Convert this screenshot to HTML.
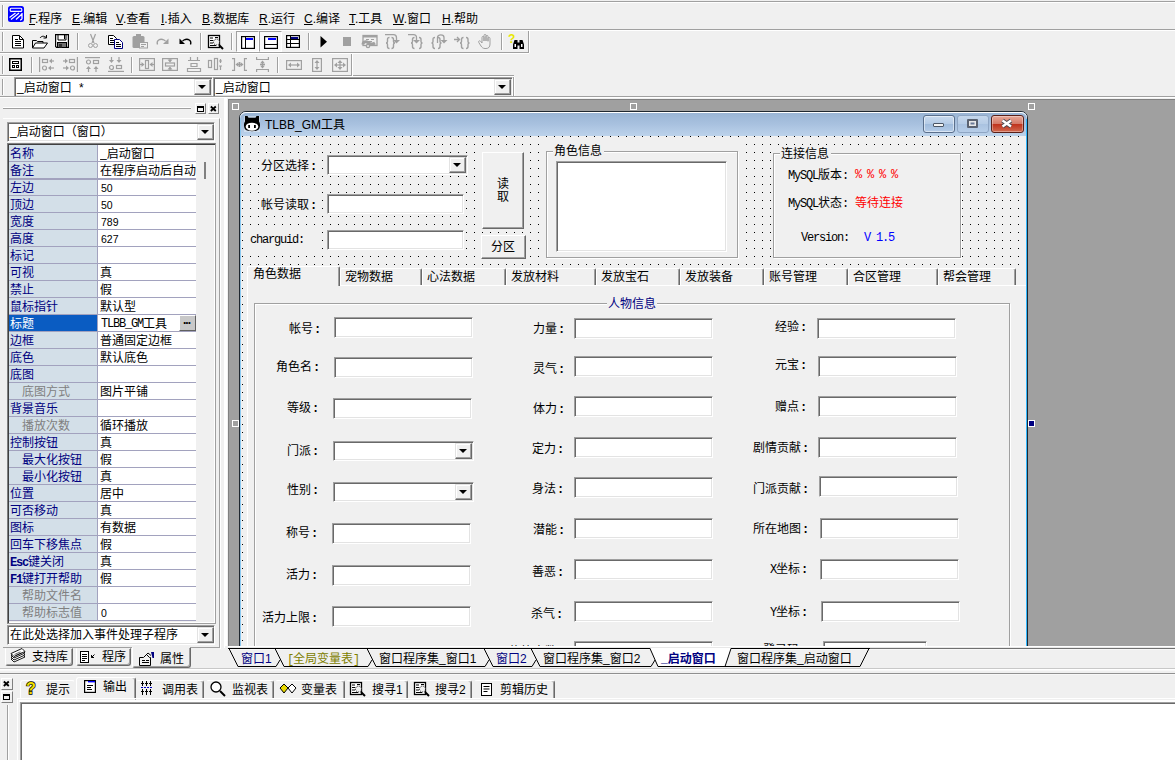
<!DOCTYPE html><html><head><meta charset="utf-8"><title>TLBB_GM</title><style>
*{box-sizing:border-box}
html,body{margin:0;padding:0}
body{width:1175px;height:760px;position:relative;overflow:hidden;background:#f0f0f0;
 font:12px "Liberation Sans","Noto Sans CJK SC",sans-serif;color:#000}
.a{position:absolute}
.t{position:absolute;white-space:nowrap;line-height:14px;height:14px}
.m{font-family:"Liberation Mono","Noto Sans CJK SC",monospace;font-size:12px;letter-spacing:-1.2px}
.m b{font-weight:normal;font-size:12px;letter-spacing:0;font-family:"Liberation Sans","Noto Sans CJK SC",sans-serif}
.hl{position:absolute;height:2px;border-top:1px solid #a0a0a0;border-bottom:1px solid #fff}
.vl{position:absolute;width:2px;border-left:1px solid #a0a0a0;border-right:1px solid #fff}
.sk{position:absolute;background:#fff;border:1px solid;border-color:#a0a0a0 #fff #fff #a0a0a0;
 box-shadow:inset 1px 1px 0 #696969, inset -1px -1px 0 #e3e3e3}
.rb{position:absolute;background:#f0f0f0;border:1px solid;border-color:#fff #696969 #696969 #fff;
 box-shadow:inset -1px -1px 0 #a0a0a0, inset 1px 1px 0 #f0f0f0}
.cb{position:absolute;background:#f0f0f0;border:1px solid;border-color:#e3e3e3 #696969 #696969 #e3e3e3;
 box-shadow:inset -1px -1px 0 #a0a0a0, inset 1px 1px 0 #fff}
.cb:after{content:"";position:absolute;left:50%;top:50%;margin:-2px 0 0 -5px;border:4px solid transparent;border-top:4px solid #000;border-bottom:none;width:0;height:0}
.gb{position:absolute;border:1px solid #a0a0a0;box-shadow:1px 1px 0 #fff, inset 1px 1px 0 #fff}
u{text-decoration:underline}
svg{position:absolute;overflow:visible}
</style></head><body>
<div class="hl" style="left:0px;top:1px;width:1175px"></div>
<div class="vl" style="left:2px;top:5px;height:22px"></div>
<div class="vl" style="left:2px;top:32px;height:19px"></div>
<div class="vl" style="left:2px;top:56px;height:18px"></div>
<div class="vl" style="left:2px;top:79px;height:16px"></div>
<svg style="left:8px;top:6px" width="16" height="16" viewBox="0 0 16 16"><rect x="0" y="0" width="16" height="16" rx="2.500" fill="#0000ff"/><rect x="2.200" y="2.200" width="11.600" height="3.200" rx="1" fill="none" stroke="#fff" stroke-width="1.100"/><path d="M7.500 7L1.500 11.500M11 7L3 13.500M14 8L8 13.500M14 7v5.500c0 1-1 1.500-2 1.500" fill="none" stroke="#fff" stroke-width="1.300"/></svg>
<div class="t " style="left:29px;top:12px;"><u>F</u>.程序</div>
<div class="t " style="left:72px;top:12px;"><u>E</u>.编辑</div>
<div class="t " style="left:116px;top:12px;"><u>V</u>.查看</div>
<div class="t " style="left:161px;top:12px;"><u>I</u>.插入</div>
<div class="t " style="left:202px;top:12px;"><u>B</u>.数据库</div>
<div class="t " style="left:259px;top:12px;"><u>R</u>.运行</div>
<div class="t " style="left:304px;top:12px;"><u>C</u>.编译</div>
<div class="t " style="left:349px;top:12px;"><u>T</u>.工具</div>
<div class="t " style="left:393px;top:12px;"><u>W</u>.窗口</div>
<div class="t " style="left:442px;top:12px;"><u>H</u>.帮助</div>
<div class="hl" style="left:0px;top:29px;width:1175px"></div>
<div class="hl" style="left:0px;top:52px;width:529px"></div>
<div class="vl" style="left:528px;top:31px;height:22px"></div>
<div class="hl" style="left:0px;top:75px;width:514px"></div>
<div class="vl" style="left:351px;top:54px;height:22px"></div>
<div class="vl" style="left:513px;top:77px;height:20px"></div>
<svg style="left:12px;top:35px" width="12" height="14" viewBox="0 0 12 14"><path d="M0.5 0.5h7l4 4v8.5h-11z" fill="#fff" stroke="#000"/><path d="M7.5 0.5v4h4" fill="none" stroke="#000"/><path d="M3 4.5h3M3 6.5h6M3 8.5h6M3 10.5h6" stroke="#000"/></svg>
<svg style="left:32px;top:35px" width="16" height="14" viewBox="0 0 16 14"><path d="M0.5 13V5.5h4l1 1h5.5V8" fill="none" stroke="#000"/><path d="M0.5 13l3-5h12l-3.5 5z" fill="#fff" stroke="#000"/><path d="M8 3c1.5-2 4-2.5 6-.5M14.5 0v3h-3" fill="none" stroke="#000"/></svg>
<svg style="left:55px;top:34px" width="14" height="14" viewBox="0 0 14 14"><path d="M0.600 0.600h12.800v12.800h-11.800l-1-1z" fill="#fff" stroke="#000" stroke-width="1.200"/><path d="M3 .5v5.500h8v-5.500" fill="none" stroke="#000"/><path d="M9.500 1v4" stroke="#000"/><rect x="2.500" y="8.500" width="9" height="5" fill="#707070" stroke="#000"/><rect x="4" y="10" width="3" height="3.500" fill="#303030"/></svg>
<div class="vl" style="left:77px;top:33px;height:17px"></div>
<svg style="left:88px;top:34px" width="10" height="15" viewBox="0 0 10 15"><path d="M2.5 0l3.5 9M7.5 0L4 9" stroke="#a0a0a0" fill="none" stroke-width="1.2"/><circle cx="2.5" cy="11.5" r="2" fill="none" stroke="#a0a0a0"/><circle cx="7.5" cy="11.5" r="2" fill="none" stroke="#a0a0a0"/></svg>
<svg style="left:108px;top:35px" width="16" height="14" viewBox="0 0 16 14"><path d="M0.5 0.5h5l3 3v6h-8z" fill="#fff" stroke="#000"/><path d="M2 3.5h3M2 5.5h5M2 7.5h5" stroke="#000"/><path d="M6.5 4.5h5l3 3v6h-8z" fill="#fff" stroke="#000080"/><path d="M8 7.5h3M8 9.5h5M8 11.5h5" stroke="#000"/></svg>
<svg style="left:132px;top:34px" width="16" height="15" viewBox="0 0 16 15"><rect x="0.5" y="2" width="12" height="12" rx="1.5" fill="#a0a0a0"/><rect x="4" y="0" width="5" height="3" fill="#a0a0a0"/><rect x="7.5" y="8.500" width="8" height="5.500" fill="#f0f0f0" stroke="#a0a0a0"/><path d="M9 10.5h5M9 12.500h3" stroke="#a0a0a0"/></svg>
<svg style="left:156px;top:37px" width="13" height="9" viewBox="0 0 13 9"><path d="M1.500 7.500C0 3.500 4 1 8 3l1.500 1" fill="none" stroke="#a0a0a0" stroke-width="1.300"/><path d="M12.500 1.500v5.500h-5.500z" fill="#a0a0a0"/></svg>
<svg style="left:179px;top:37px" width="13" height="9" viewBox="0 0 13 9"><path d="M11.500 7.500C13 3.500 9 1 5 3l-1.500 1" fill="none" stroke="#000" stroke-width="1.300"/><path d="M0.500 1.500v5.500h5.500z" fill="#000"/></svg>
<div class="vl" style="left:200px;top:33px;height:17px"></div>
<svg style="left:208px;top:35px" width="16" height="15" viewBox="0 0 16 15"><rect x="0.5" y="0.5" width="11" height="12" fill="#fff" stroke="#000" stroke-width="1.300"/><path d="M2 3h3M2 5.500h3M2 8h3M2 10.500h6M7 2.500h3" stroke="#000"/><circle cx="8.500" cy="7" r="3" fill="#f0f0f0" stroke="#000" stroke-dasharray="1 1"/><path d="M11 10l4 4" stroke="#000" stroke-width="2"/></svg>
<div class="vl" style="left:231px;top:33px;height:17px"></div>
<div class="a" style="left:236px;top:31px;width:23px;height:21px;background:#f8f8f8;border:1px solid;border-color:#a0a0a0 #fff #fff #a0a0a0"></div>
<div class="a" style="left:259px;top:31px;width:23px;height:21px;background:#f8f8f8;border:1px solid;border-color:#a0a0a0 #fff #fff #a0a0a0"></div>
<svg style="left:241px;top:36px" width="14" height="13" viewBox="0 0 14 13"><g shape-rendering="crispEdges"><rect x="0.600" y="0.600" width="12.800" height="11.800" fill="#fff" stroke="#000" stroke-width="1.200" shape-rendering="auto"/><rect x="5" y="2" width="7" height="2" fill="#0000ff"/><rect x="4" y="1" width="1" height="11" fill="#000"/></g></svg>
<svg style="left:264px;top:36px" width="14" height="13" viewBox="0 0 14 13"><g shape-rendering="crispEdges"><rect x="0.600" y="0.600" width="12.800" height="11.800" fill="#fff" stroke="#000" stroke-width="1.200" shape-rendering="auto"/><rect x="4" y="2" width="8" height="2" fill="#0000ff"/><rect x="1" y="8" width="12" height="1" fill="#000"/></g></svg>
<svg style="left:286px;top:35px" width="14" height="13" viewBox="0 0 14 13"><g shape-rendering="crispEdges"><rect x="0.600" y="0.600" width="12.800" height="11.800" fill="#fff" stroke="#000" stroke-width="1.200" shape-rendering="auto"/><rect x="5" y="2" width="7" height="2" fill="#000080"/><rect x="4" y="1" width="1" height="11" fill="#000"/><rect x="1" y="4" width="12" height="1" fill="#000"/><rect x="1" y="8" width="12" height="1" fill="#000"/></g></svg>
<div class="vl" style="left:308px;top:33px;height:17px"></div>
<svg style="left:320px;top:36px" width="8" height="12" viewBox="0 0 8 12"><path d="M0.500 0L7 5.750L0.500 11.500z" fill="#000"/></svg>
<svg style="left:343px;top:37px" width="8" height="9" viewBox="0 0 8 9"><rect width="8" height="9" fill="#a0a0a0"/></svg>
<svg style="left:362px;top:35px" width="16" height="14" viewBox="0 0 16 14"><rect x="1" y="0.500" width="14" height="10" fill="none" stroke="#a0a0a0" stroke-width="1.300"/><path d="M1 1.500h14" stroke="#a0a0a0" stroke-width="2"/><path d="M4 4.500h3M9 4.500h3M4 6.500h6" stroke="#a0a0a0"/><path d="M1 9.500c0-3 3-3.500 5-2s4 2.500 7 .5" fill="none" stroke="#a0a0a0" stroke-width="3"/><circle cx="6" cy="11" r="2.300" fill="#a0a0a0"/><circle cx="6" cy="11" r="0.900" fill="#f0f0f0"/></svg>
<svg style="left:385px;top:34px" width="16" height="15" viewBox="0 0 16 15"><path d="M4.5 3.5c-2 0-2 1-2 2v2c0 1-.5 1.500-1.500 1.500c1 0 1.500 .5 1.500 1.500v2c0 1 0 2 2 2" fill="none" stroke="#a0a0a0" stroke-width="1.400"/><path d="M6.5 3.5c2 0 2 1 2 2v2c0 1 .5 1.500 1.500 1.500c-1 0-1.500 .5-1.500 1.500v2c0 1 0 2-2 2" fill="none" stroke="#a0a0a0" stroke-width="1.400"/><path d="M0 0.700h8.500c2.500 0 3 1.500 3 3v3" fill="none" stroke="#a0a0a0" stroke-width="1.300"/><path d="M8 6h7l-3.500 3.500z" fill="#a0a0a0"/></svg>
<svg style="left:408px;top:34px" width="16" height="15" viewBox="0 0 16 15"><path d="M6.5 3.5c-2 0-2 1-2 2v2c0 1-.5 1.500-1.500 1.500c1 0 1.500 .5 1.500 1.500v2c0 1 0 2 2 2" fill="none" stroke="#a0a0a0" stroke-width="1.400"/><path d="M11 3.5c2 0 2 1 2 2v2c0 1 .5 1.500 1.500 1.500c-1 0-1.500 .5-1.500 1.500v2c0 1 0 2-2 2" fill="none" stroke="#a0a0a0" stroke-width="1.400"/><path d="M0 0.700h5.500c2.500 0 3 1.500 3 3v3" fill="none" stroke="#a0a0a0" stroke-width="1.300"/><path d="M5 6h7l-3.500 3.500z" fill="#a0a0a0"/></svg>
<svg style="left:431px;top:34px" width="17" height="15" viewBox="0 0 17 15"><path d="M4 3.5c-2 0-2 1-2 2v2c0 1-.5 1.500-1.500 1.500c1 0 1.500 .5 1.500 1.500v2c0 1 0 2 2 2" fill="none" stroke="#a0a0a0" stroke-width="1.400"/><path d="M7 3.5c2 0 2 1 2 2v2c0 1 .5 1.500 1.500 1.500c-1 0-1.500 .5-1.500 1.500v2c0 1 0 2-2 2" fill="none" stroke="#a0a0a0" stroke-width="1.400"/><path d="M6.500 9V3.500c0-3.500 6.500-3.500 6.500 0v3" fill="none" stroke="#a0a0a0" stroke-width="1.300"/><path d="M9.5 6h7l-3.500 3.500z" fill="#a0a0a0"/></svg>
<svg style="left:454px;top:34px" width="17" height="15" viewBox="0 0 17 15"><path d="M9.5 3.5c-2 0-2 1-2 2v2c0 1-.5 1.500-1.500 1.500c1 0 1.500 .5 1.500 1.500v2c0 1 0 2 2 2" fill="none" stroke="#a0a0a0" stroke-width="1.400"/><path d="M12 3.5c2 0 2 1 2 2v2c0 1 .5 1.500 1.500 1.500c-1 0-1.500 .5-1.500 1.500v2c0 1 0 2-2 2" fill="none" stroke="#a0a0a0" stroke-width="1.400"/><path d="M0 5.500h5M3 3l2.500 2.500L3 8" fill="none" stroke="#a0a0a0" stroke-width="1.300"/></svg>
<svg style="left:478px;top:34px" width="14" height="15" viewBox="0 0 14 15"><path d="M4 9V3.500c0-1.500 2-1.500 2 0V7M6 7V1.500c0-1.500 2-1.500 2 0V7M8 7V2.500c0-1.500 2-1.500 2 0V7M10 7.500V4.500c0-1.500 2-1.500 2 0V10c0 3-1.500 4.500-4 4.500H7c-2 0-3-1-4-2.500L.8 8.500c-.8-1.500 1-2.500 2-1L4 9" fill="#f0f0f0" stroke="#a0a0a0"/></svg>
<div class="vl" style="left:501px;top:33px;height:17px"></div>
<svg style="left:508px;top:33px" width="17" height="17"><text x="0" y="10" font-family="Liberation Sans,sans-serif" font-weight="bold" font-size="12" fill="#e8e800">?</text><path d="M6.500 7h3v2.500h2V7h3l1.500 4.500v4.500h-4.500v-3.500h-2v3.500H5v-4.500z" fill="#000"/><rect x="6.500" y="11" width="1.500" height="3" fill="#fff"/><rect x="13" y="11" width="1.500" height="3" fill="#fff"/></svg>
<svg style="left:9px;top:58px" width="13" height="13" viewBox="0 0 13 13"><rect x="0.75" y="0.75" width="11.500" height="11.500" fill="#fff" stroke="#000" stroke-width="1.500"/><g shape-rendering="crispEdges" fill="none" stroke="#000"><rect x="3.500" y="3.500" width="6" height="2"/><rect x="3.500" y="7.500" width="2" height="2"/><rect x="7.500" y="7.500" width="2" height="2"/></g></svg>
<div class="vl" style="left:31px;top:57px;height:16px"></div>
<svg style="left:39px;top:57px" width="16" height="15" viewBox="0 0 16 15"><g fill="none" stroke="#a0a0a0" stroke-width="1.200"><path d="M0.600 0v15"/><rect x="3.500" y="2.500" width="5" height="3"/><circle cx="5.500" cy="11" r="2"/><path d="M11 4h4"/><path d="M10 4l3-2.500v5z" fill="#a0a0a0" stroke="none"/><path d="M10 11h5"/><path d="M9 11l3-2.500v5z" fill="#a0a0a0" stroke="none"/></g></svg>
<svg style="left:62px;top:57px" width="16" height="15" viewBox="0 0 16 15"><g fill="none" stroke="#a0a0a0" stroke-width="1.200"><path d="M15.400 0v15"/><rect x="7.500" y="2.500" width="5" height="3"/><circle cx="10.500" cy="11" r="2"/><path d="M1 4h4"/><path d="M6 4l-3-2.500v5z" fill="#a0a0a0" stroke="none"/><path d="M1 11h5"/><path d="M7 11l-3-2.500v5z" fill="#a0a0a0" stroke="none"/></g></svg>
<svg style="left:85px;top:57px" width="16" height="15" viewBox="0 0 16 15"><g fill="none" stroke="#a0a0a0" stroke-width="1.200"><path d="M0 0.600h15"/><circle cx="3.500" cy="5" r="2"/><rect x="8.500" y="3.500" width="5" height="3"/><path d="M3.5 10v5"/><path d="M3.5 9l-2.500 3h5z" fill="#a0a0a0" stroke="none"/><path d="M11 10v5"/><path d="M11 9l-2.500 3h5z" fill="#a0a0a0" stroke="none"/></g></svg>
<svg style="left:108px;top:57px" width="16" height="15" viewBox="0 0 16 15"><g fill="none" stroke="#a0a0a0" stroke-width="1.200"><path d="M0 14.400h16"/><circle cx="3.500" cy="10.500" r="2"/><rect x="8.500" y="8.500" width="5" height="3"/><path d="M3.5 0v5"/><path d="M3.5 6l-2.500-3h5z" fill="#a0a0a0" stroke="none"/><path d="M11 0v5"/><path d="M11 6l-2.500-3h5z" fill="#a0a0a0" stroke="none"/></g></svg>
<div class="vl" style="left:131px;top:57px;height:16px"></div>
<svg style="left:139px;top:58px" width="16" height="13" viewBox="0 0 16 13"><g fill="none" stroke="#a0a0a0" stroke-width="1.200"><rect x="0.600" y="0.600" width="14.800" height="11.800"/><rect x="6.500" y="2.500" width="3" height="8"/><path d="M1 6.5h3.5"/><path d="M5.5 6.5l-3-2.500v5z" fill="#a0a0a0" stroke="none"/><path d="M11.5 6.5h3.5"/><path d="M10.5 6.5l3-2.500v5z" fill="#a0a0a0" stroke="none"/></g></svg>
<svg style="left:162px;top:58px" width="16" height="13" viewBox="0 0 16 13"><g fill="none" stroke="#a0a0a0" stroke-width="1.200"><rect x="0.600" y="0.600" width="14.800" height="11.800"/><rect x="3.500" y="5" width="9" height="3"/><path d="M8 1v2.5"/><path d="M8 4.5l-2.500-3h5z" fill="#a0a0a0" stroke="none"/><path d="M8 9.5v2.5"/><path d="M8 8.5l-2.500 3h5z" fill="#a0a0a0" stroke="none"/></g></svg>
<svg style="left:187px;top:57px" width="14" height="15" viewBox="0 0 14 15"><g fill="none" stroke="#a0a0a0" stroke-width="1.200"><path d="M3.500 0v3M10.500 0v3M1 3.500h12M4 6.500h6v3h-6zM0.500 11.500h13v3h-13z"/></g></svg>
<svg style="left:208px;top:57px" width="14" height="15" viewBox="0 0 14 15"><g fill="none" stroke="#a0a0a0" stroke-width="1.200"><rect x="0.500" y="3.500" width="3" height="7"/><rect x="6.500" y="1.500" width="3" height="11"/><path d="M11 4h3M12.500 2v4M11 9h3M12.500 9v4"/></g></svg>
<svg style="left:232px;top:58px" width="15" height="13" viewBox="0 0 15 13"><g fill="none" stroke="#a0a0a0" stroke-width="1.200"><path d="M0 0.600h2.500v11.800h-2.500M15 0.600h-2.500v11.800h2.500M7.500 4v5"/><path d="M4.5 6.5h3"/><path d="M3.5 6.5l3-2.500v5z" fill="#a0a0a0" stroke="none"/><path d="M7.5 6.5h3"/><path d="M11.5 6.5l-3-2.500v5z" fill="#a0a0a0" stroke="none"/></g></svg>
<svg style="left:256px;top:57px" width="13" height="15" viewBox="0 0 13 15"><g fill="none" stroke="#a0a0a0" stroke-width="1.200"><path d="M0.600 0v2.500h11.800v-2.500M0.600 15v-2.500h11.800v2.500M4 7.500h5"/><path d="M6.5 4.5v3"/><path d="M6.5 3.5l-2.500 3h5z" fill="#a0a0a0" stroke="none"/><path d="M6.5 7.5v3"/><path d="M6.5 11.5l-2.500-3h5z" fill="#a0a0a0" stroke="none"/></g></svg>
<div class="vl" style="left:277px;top:57px;height:16px"></div>
<svg style="left:286px;top:60px" width="16" height="10" viewBox="0 0 16 10"><g fill="none" stroke="#a0a0a0" stroke-width="1.200"><rect x="0.600" y="0.600" width="14.800" height="8.800"/><path d="M3 5h5"/><path d="M2 5l3-2.500v5z" fill="#a0a0a0" stroke="none"/><path d="M8 5h5"/><path d="M14 5l-3-2.500v5z" fill="#a0a0a0" stroke="none"/></g></svg>
<svg style="left:312px;top:58px" width="10" height="14" viewBox="0 0 10 14"><g fill="none" stroke="#a0a0a0" stroke-width="1.200"><rect x="0.600" y="0.600" width="8.800" height="12.800"/><path d="M5 3v4"/><path d="M5 2l-2.500 3h5z" fill="#a0a0a0" stroke="none"/><path d="M5 7v4"/><path d="M5 12l-2.500-3h5z" fill="#a0a0a0" stroke="none"/></g></svg>
<svg style="left:332px;top:58px" width="16" height="14" viewBox="0 0 16 14"><g fill="none" stroke="#a0a0a0" stroke-width="1.200"><rect x="0.600" y="0.600" width="14.800" height="12.800"/><path d="M3 7h5"/><path d="M2 7l3-2.500v5z" fill="#a0a0a0" stroke="none"/><path d="M8 7h5"/><path d="M14 7l-3-2.500v5z" fill="#a0a0a0" stroke="none"/><path d="M8 3v4"/><path d="M8 2l-2.500 3h5z" fill="#a0a0a0" stroke="none"/><path d="M8 7v4"/><path d="M8 12l-2.500-3h5z" fill="#a0a0a0" stroke="none"/></g></svg>
<div class="sk" style="left:14px;top:77px;width:199px;height:20px;"></div>
<div class="t " style="left:17px;top:81px;"><span style="position:relative;top:-1.500px">_</span>启动窗口<span class="m" style="white-space:pre"> *</span></div>
<div class="cb" style="left:194px;top:79px;width:17px;height:16px;"></div>
<div class="sk" style="left:213px;top:77px;width:300px;height:20px;"></div>
<div class="t " style="left:216px;top:81px;"><span style="position:relative;top:-1.5px">_</span>启动窗口</div>
<div class="cb" style="left:494px;top:79px;width:17px;height:16px;"></div>
<div class="hl" style="left:0px;top:96px;width:1175px"></div>
<div class="a" style="left:3px;top:107px;width:188px;height:2px;border-top:1px solid #fff;border-bottom:1px solid #a0a0a0"></div>
<div class="a" style="left:195px;top:103px;width:11px;height:11px;background:#f0f0f0;border:1px solid;border-color:#fff #808080 #808080 #fff"></div>
<svg style="left:197px;top:105px" width="7" height="7" shape-rendering="crispEdges"><rect x="0.500" y="1.500" width="6" height="5" fill="none" stroke="#000"/><path d="M0 1.500h7" stroke="#000" stroke-width="2"/></svg>
<div class="a" style="left:208px;top:103px;width:11px;height:11px;background:#f0f0f0;border:1px solid;border-color:#fff #808080 #808080 #fff"></div>
<svg style="left:210px;top:105px" width="7" height="7"><path d="M0.800 1.500l5 4.500M5.800 1.500l-5 4.500" stroke="#000" stroke-width="1.800"/></svg>
<div class="a" style="left:3px;top:118px;width:217px;height:530px;border-right:1px solid #a0a0a0;border-bottom:1px solid #a0a0a0;border-top:1px solid #fff"></div>
<div class="a" style="left:220px;top:118px;width:1px;height:531px;background:#fff"></div>
<div class="sk" style="left:7px;top:122px;width:208px;height:20px;"></div>
<div class="t " style="left:10px;top:125px;"><span style="position:relative;top:-1.5px">_</span>启动窗口（窗口）</div>
<div class="cb" style="left:197px;top:124px;width:17px;height:16px;"></div>
<div class="a" style="left:7px;top:143px;width:209px;height:481px;border:1px solid;border-color:#808080 #a0a0a0 #a0a0a0 #808080;box-shadow:inset 1px 1px 0 #404040,inset -1px -1px 0 #fff;background:#f0f0f0"></div>
<div class="a" style="left:9px;top:145px;width:88px;height:476px;background:#d3dfe8"></div>
<div class="a" style="left:98px;top:145px;width:98px;height:476px;background:#fff"></div>
<div class="a" style="left:97px;top:145px;width:1px;height:476px;background:#a2a2be"></div>
<div class="t " style="left:10px;top:147px;color:#000080">名称</div>
<div class="t " style="left:100px;top:147px;width:96px;overflow:hidden"><span style="position:relative;top:-1.5px">_</span>启动窗口</div>
<div class="a" style="left:9px;top:161px;width:187px;height:1px;background:#a2a2be"></div>
<div class="t " style="left:10px;top:164px;color:#000080">备注</div>
<div class="t " style="left:100px;top:164px;width:96px;overflow:hidden">在程序启动后自动</div>
<div class="a" style="left:9px;top:178px;width:187px;height:2px;background:#a2a2be"></div>
<div class="t " style="left:10px;top:181px;color:#000080">左边</div>
<div class="t " style="left:101px;top:181px;font-size:10.5px">50</div>
<div class="a" style="left:9px;top:195px;width:187px;height:1px;background:#a2a2be"></div>
<div class="t " style="left:10px;top:198px;color:#000080">顶边</div>
<div class="t " style="left:101px;top:198px;font-size:10.5px">50</div>
<div class="a" style="left:9px;top:212px;width:187px;height:1px;background:#a2a2be"></div>
<div class="t " style="left:10px;top:215px;color:#000080">宽度</div>
<div class="t " style="left:101px;top:215px;font-size:10.5px">789</div>
<div class="a" style="left:9px;top:229px;width:187px;height:1px;background:#a2a2be"></div>
<div class="t " style="left:10px;top:232px;color:#000080">高度</div>
<div class="t " style="left:101px;top:232px;font-size:10.5px">627</div>
<div class="a" style="left:9px;top:246px;width:187px;height:1px;background:#a2a2be"></div>
<div class="t " style="left:10px;top:249px;color:#000080">标记</div>
<div class="a" style="left:9px;top:263px;width:187px;height:1px;background:#a2a2be"></div>
<div class="t " style="left:10px;top:266px;color:#000080">可视</div>
<div class="t " style="left:100px;top:266px;width:96px;overflow:hidden">真</div>
<div class="a" style="left:9px;top:280px;width:187px;height:1px;background:#a2a2be"></div>
<div class="t " style="left:10px;top:283px;color:#000080">禁止</div>
<div class="t " style="left:100px;top:283px;width:96px;overflow:hidden">假</div>
<div class="a" style="left:9px;top:297px;width:187px;height:1px;background:#a2a2be"></div>
<div class="t " style="left:10px;top:300px;color:#000080">鼠标指针</div>
<div class="t " style="left:100px;top:300px;width:96px;overflow:hidden">默认型</div>
<div class="a" style="left:9px;top:314px;width:187px;height:1px;background:#a2a2be"></div>
<div class="a" style="left:9px;top:315px;width:88px;height:16px;background:#0a5cc2"></div>
<div class="t " style="left:10px;top:317px;color:#fff">标题</div>
<div class="t m" style="left:101px;top:316px;">TLBB_GM<b style="position:relative;top:1px">工具</b></div>
<div class="a" style="left:9px;top:331px;width:187px;height:1px;background:#a2a2be"></div>
<div class="t " style="left:10px;top:334px;color:#000080">边框</div>
<div class="t " style="left:100px;top:334px;width:96px;overflow:hidden">普通固定边框</div>
<div class="a" style="left:9px;top:348px;width:187px;height:1px;background:#a2a2be"></div>
<div class="t " style="left:10px;top:351px;color:#000080">底色</div>
<div class="t " style="left:100px;top:351px;width:96px;overflow:hidden">默认底色</div>
<div class="a" style="left:9px;top:365px;width:187px;height:1px;background:#a2a2be"></div>
<div class="t " style="left:10px;top:368px;color:#000080">底图</div>
<div class="a" style="left:9px;top:382px;width:187px;height:1px;background:#a2a2be"></div>
<div class="t " style="left:22px;top:385px;color:#808080">底图方式</div>
<div class="t " style="left:100px;top:385px;width:96px;overflow:hidden">图片平铺</div>
<div class="a" style="left:9px;top:399px;width:187px;height:1px;background:#a2a2be"></div>
<div class="t " style="left:10px;top:402px;color:#000080">背景音乐</div>
<div class="a" style="left:9px;top:416px;width:187px;height:1px;background:#a2a2be"></div>
<div class="t " style="left:22px;top:419px;color:#808080">播放次数</div>
<div class="t " style="left:100px;top:419px;width:96px;overflow:hidden">循环播放</div>
<div class="a" style="left:9px;top:433px;width:187px;height:1px;background:#a2a2be"></div>
<div class="t " style="left:10px;top:436px;color:#000080">控制按钮</div>
<div class="t " style="left:100px;top:436px;width:96px;overflow:hidden">真</div>
<div class="a" style="left:9px;top:450px;width:187px;height:1px;background:#a2a2be"></div>
<div class="t " style="left:22px;top:453px;color:#000080">最大化按钮</div>
<div class="t " style="left:100px;top:453px;width:96px;overflow:hidden">假</div>
<div class="a" style="left:9px;top:467px;width:187px;height:1px;background:#a2a2be"></div>
<div class="t " style="left:22px;top:470px;color:#000080">最小化按钮</div>
<div class="t " style="left:100px;top:470px;width:96px;overflow:hidden">真</div>
<div class="a" style="left:9px;top:484px;width:187px;height:1px;background:#a2a2be"></div>
<div class="t " style="left:10px;top:487px;color:#000080">位置</div>
<div class="t " style="left:100px;top:487px;width:96px;overflow:hidden">居中</div>
<div class="a" style="left:9px;top:501px;width:187px;height:1px;background:#a2a2be"></div>
<div class="t " style="left:10px;top:504px;color:#000080">可否移动</div>
<div class="t " style="left:100px;top:504px;width:96px;overflow:hidden">真</div>
<div class="a" style="left:9px;top:518px;width:187px;height:1px;background:#a2a2be"></div>
<div class="t " style="left:10px;top:521px;color:#000080">图标</div>
<div class="t " style="left:100px;top:521px;width:96px;overflow:hidden">有数据</div>
<div class="a" style="left:9px;top:535px;width:187px;height:1px;background:#a2a2be"></div>
<div class="t " style="left:10px;top:538px;color:#000080">回车下移焦点</div>
<div class="t " style="left:100px;top:538px;width:96px;overflow:hidden">假</div>
<div class="a" style="left:9px;top:552px;width:187px;height:1px;background:#a2a2be"></div>
<div class="t " style="left:10px;top:555px;color:#000080"><span class="m" style="font-weight:bold">Esc</span>键关闭</div>
<div class="t " style="left:100px;top:555px;width:96px;overflow:hidden">真</div>
<div class="a" style="left:9px;top:569px;width:187px;height:1px;background:#a2a2be"></div>
<div class="t " style="left:10px;top:572px;color:#000080"><span class="m" style="font-weight:bold">F1</span>键打开帮助</div>
<div class="t " style="left:100px;top:572px;width:96px;overflow:hidden">假</div>
<div class="a" style="left:9px;top:586px;width:187px;height:1px;background:#a2a2be"></div>
<div class="t " style="left:22px;top:589px;color:#808080">帮助文件名</div>
<div class="a" style="left:9px;top:603px;width:187px;height:1px;background:#a2a2be"></div>
<div class="t " style="left:22px;top:606px;color:#808080">帮助标志值</div>
<div class="t " style="left:101px;top:606px;font-size:10.5px">0</div>
<div class="a" style="left:9px;top:620px;width:187px;height:1px;background:#a2a2be"></div>
<div class="a" style="left:179px;top:315px;width:17px;height:16px;background:#c8c8c8;border:1px solid;border-color:#fff #606060 #606060 #fff"></div>
<div class="t " style="left:183px;top:313px;"><span style="font-weight:bold;letter-spacing:-1px">...</span></div>
<div class="a" style="left:204px;top:162px;width:2px;height:17px;background:#808080"></div>
<div class="sk" style="left:7px;top:625px;width:208px;height:20px;"></div>
<div class="t " style="left:10px;top:628px;">在此处选择加入事件处理子程序</div>
<div class="cb" style="left:197px;top:627px;width:17px;height:16px;"></div>
<div class="a" style="left:5px;top:648px;width:68px;height:18px;border:1px solid;border-color:transparent #696969 #696969 #fff;border-radius:0 0 3px 3px;box-shadow:inset -1px -1px 0 #a0a0a0"></div>
<div class="a" style="left:76px;top:648px;width:55px;height:18px;border:1px solid;border-color:transparent #696969 #696969 #fff;border-radius:0 0 3px 3px;box-shadow:inset -1px -1px 0 #a0a0a0"></div>
<div class="a" style="left:132px;top:647px;width:59px;height:21px;background:#f0f0f0;border:1px solid;border-color:#f0f0f0 #696969 #696969 #fff;border-radius:0 0 3px 3px;box-shadow:inset -1px -1px 0 #a0a0a0"></div>
<div class="t " style="left:32px;top:650px;">支持库</div>
<div class="t " style="left:102px;top:650px;">程序</div>
<div class="t " style="left:160px;top:652px;">属性</div>
<svg style="left:10px;top:649px" width="17" height="15" viewBox="0 0 17 15"><g fill="#fff" stroke="#000" stroke-width="0.900"><path d="M1 10l3 3 11-5-3-3z"/><path d="M1 8l3 3 11-5-3-3z"/><path d="M1 6l3 3 11-5-3-3z"/><path d="M1 4.500l3 3 11-5-3-3z"/></g><path d="M4.500 5.500l6-2.700M5.500 6.500l6-2.700" stroke="#000" stroke-width="0.600"/></svg>
<svg style="left:80px;top:651px" width="16" height="13" viewBox="0 0 16 13"><rect x="0.500" y="0.500" width="8" height="11" fill="#fff" stroke="#000"/><path d="M2 3.500h5M2 5.500h5M2 7.500h5M2 9.500h3" stroke="#000" fill="none" shape-rendering="crispEdges"/><path d="M14.500 3.500l-3 3M11.500 4v2.500h2.500" stroke="#000" fill="none"/></svg>
<svg style="left:138px;top:651px" width="17" height="15" viewBox="0 0 17 15"><path d="M1.500 14.500v-8h4l3-3 3 3h1v8z" fill="#f0f0f0" stroke="#000"/><path d="M3.500 9.500h3M3.500 11.500h7M8 9.500h3" stroke="#000" shape-rendering="crispEdges"/><path d="M6 6l4-4 3 2.500" fill="none" stroke="#000"/><path d="M13 1h3v6h-1.500z" fill="#000080"/></svg>
<div class="a" style="left:224px;top:98px;width:3px;height:550px;background:#fff"></div>
<div class="a" style="left:228px;top:99px;width:947px;height:547px;background:#a0a0a0;border-top:1px solid #808080;border-left:1px solid #808080;overflow:hidden"></div>
<div class="a" style="left:232px;top:103px;width:7px;height:7px;background:#a0a0a0;border:1px solid #fff"></div>
<div class="a" style="left:630px;top:103px;width:7px;height:7px;background:#a0a0a0;border:1px solid #fff"></div>
<div class="a" style="left:1028px;top:103px;width:7px;height:7px;background:#a0a0a0;border:1px solid #fff"></div>
<div class="a" style="left:232px;top:420px;width:7px;height:7px;background:#a0a0a0;border:1px solid #fff"></div>
<div class="a" style="left:1028px;top:420px;width:7px;height:7px;background:#000080;border:1px solid #fff"></div>
<div class="a" style="left:239px;top:111px;width:789px;height:535px;overflow:hidden">
<div class="a" style="left:0;top:0;width:789px;height:640px;border:1px solid #202830;border-radius:7px 7px 0 0;background:#bdd3ec"></div>
<div class="a" style="left:1px;top:1px;width:787px;height:24px;border-radius:6px 6px 0 0;background:linear-gradient(#99b4d4,#a8c1df 50%,#bcd3eb);box-shadow:inset 0 1px 0 #fff"></div>
<div class="a" style="left:787px;top:8px;width:1px;height:640px;background:#30b8ff"></div>
<div class="a" style="left:1px;top:8px;width:1px;height:640px;background:#8cc8f0"></div>
<div class="a" style="left:2px;top:25px;width:785px;height:620px;background-image:repeating-linear-gradient(180deg,transparent 0 1px,#f0f0f0 1px 8px),repeating-linear-gradient(90deg,#000 0 1px,#f0f0f0 1px 8px);background-size:8px 8px;background-position:0 0,1px 0"></div>
</div>
<svg style="left:244px;top:116px" width="16" height="16" viewBox="0 0 16 16"><rect width="16" height="16" fill="#fff" opacity="0.35"/><path d="M1 0h2.500l1 1.700h7l1-1.700h2.500v5.500c1.500 2 1.500 6.500-1 8.500c-2 1.500-10 1.500-12 0c-2.500-2-2.500-6.500-1-8.500z" fill="#000"/><ellipse cx="8" cy="10.700" rx="6.300" ry="4" fill="#fff"/><rect x="4.200" y="9" width="1.800" height="3" fill="#000"/><rect x="10" y="9" width="1.800" height="3" fill="#000"/></svg>
<div class="t " style="left:265px;top:118px;font-size:12px">TLBB_GM工具</div>
<div class="a" style="left:923px;top:115px;width:32px;height:18px;border:1px solid #5a6f8c;border-radius:3px;background:linear-gradient(#c9daee,#b4cbe6 50%,#9fbbdc 50%,#b3cbe8);box-shadow:inset 0 0 0 1px rgba(255,255,255,.5)"></div>
<div class="a" style="left:933px;top:123px;width:11px;height:4px;border:1px solid #4b5666;background:#f4f4f4;border-radius:1px"></div>
<div class="a" style="left:957px;top:115px;width:32px;height:18px;border:1px solid #8fa6c4;border-radius:3px;background:linear-gradient(#c5d7ec,#b6cce6 50%,#a9c2e0 50%,#b6cdE8)"></div>
<div class="a" style="left:967px;top:119px;width:11px;height:9px;border:2px solid #5a6270;background:#e8e8e8;border-radius:1px;box-shadow:inset 0 0 0 1.500px #e8e8e8, inset 0 0 0 3px #6a7a98"></div>
<div class="a" style="left:991px;top:115px;width:33px;height:18px;border:1px solid #5a2018;border-radius:3px;background:linear-gradient(#e8a898,#d47a68 48%,#c0321c 52%,#d06a50);box-shadow:inset 0 0 0 1px rgba(255,255,255,.35)"></div>
<svg style="left:1001px;top:119px" width="12" height="9"><path d="M1.500 1.500l8.500 6M10 1.500l-8.500 6" stroke="#4a4a52" stroke-width="4.200"/><path d="M1.500 1.500l8.500 6M10 1.500l-8.500 6" stroke="#fff" stroke-width="2.400"/></svg>
<div class="a" style="left:260px;top:154px;width:60px;height:21px;background:#f0f0f0"></div>
<div class="t " style="left:261px;top:159px;">分区选择<span class="m" style="font-weight:bold;margin-left:1px">:</span></div>
<div class="a" style="left:260px;top:189px;width:60px;height:24px;background:#f0f0f0"></div>
<div class="t " style="left:261px;top:198px;">帐号读取<span class="m" style="font-weight:bold;margin-left:1px">:</span></div>
<div class="a" style="left:245px;top:228px;width:75px;height:24px;background:#f0f0f0"></div>
<div class="t m" style="left:250px;top:233px;">charguid:</div>
<div class="sk" style="left:327px;top:155px;width:141px;height:20px;"></div>
<div class="cb" style="left:449px;top:157px;width:17px;height:16px;"></div>
<div class="sk" style="left:327px;top:194px;width:137px;height:20px;"></div>
<div class="sk" style="left:327px;top:230px;width:137px;height:20px;"></div>
<div class="rb" style="left:482px;top:152px;width:42px;height:77px;"><div class="t" style="left:14px;top:25px;line-height:13px;height:28px;width:12px;white-space:normal">读取</div></div>
<div class="rb" style="left:481px;top:235px;width:45px;height:24px;"><div class="t" style="left:9px;top:4px">分区</div></div>
<div class="a" style="left:546px;top:144px;width:193px;height:115px;background:#f0f0f0"></div>
<div class="gb" style="left:546px;top:151px;width:192px;height:107px;"></div>
<div class="t " style="left:553px;top:144px;width:51px;height:14px;line-height:14px;background:#f0f0f0;padding-left:1px">角色信息</div>
<div class="sk" style="left:556px;top:161px;width:171px;height:91px;"></div>
<div class="a" style="left:773px;top:146px;width:189px;height:113px;background:#f0f0f0"></div>
<div class="gb" style="left:773px;top:153px;width:188px;height:105px;"></div>
<div class="t " style="left:780px;top:147px;width:51px;height:14px;line-height:14px;background:#f0f0f0;padding-left:1px">连接信息</div>
<div class="t m" style="left:788px;top:168px;">MySQL<b>版本</b>:</div>
<div class="t m" style="left:855px;top:168px;color:#f00">% % % %</div>
<div class="t m" style="left:788px;top:196px;">MySQL<b>状态</b>:</div>
<div class="t " style="left:855px;top:196px;color:#f00">等待连接</div>
<div class="t m" style="left:801px;top:231px;">Version:</div>
<div class="t m" style="left:864px;top:231px;color:#00f">V 1.5</div>
<div class="a" style="left:247px;top:266px;width:779px;height:20px;background:#f0f0f0"></div>
<div class="a" style="left:247px;top:285px;width:779px;height:365px;background:#f0f0f0;border-left:1px solid #fff;border-top:1px solid #fff"></div>
<div class="a" style="left:247px;top:266px;width:93px;height:20px;background:#f0f0f0;border-left:1px solid #fff;border-top:1px solid #fff;border-right:1px solid #696969;box-shadow:inset -1px 0 0 #a0a0a0;border-radius:2px 2px 0 0"></div>
<div class="t " style="left:253px;top:267px;">角色数据</div>
<div class="a" style="left:340px;top:268px;width:82px;height:17px;background:#f0f0f0;border-top:1px solid #fff;border-right:1px solid #696969;box-shadow:inset -1px 0 0 #a0a0a0;border-left:1px solid #fff;border-radius:2px 2px 0 0"></div>
<div class="t " style="left:345px;top:270px;">宠物数据</div>
<div class="a" style="left:422px;top:268px;width:84px;height:17px;background:#f0f0f0;border-top:1px solid #fff;border-right:1px solid #696969;box-shadow:inset -1px 0 0 #a0a0a0;border-left:1px solid #fff;border-radius:2px 2px 0 0"></div>
<div class="t " style="left:427px;top:270px;">心法数据</div>
<div class="a" style="left:506px;top:268px;width:90px;height:17px;background:#f0f0f0;border-top:1px solid #fff;border-right:1px solid #696969;box-shadow:inset -1px 0 0 #a0a0a0;border-left:1px solid #fff;border-radius:2px 2px 0 0"></div>
<div class="t " style="left:511px;top:270px;">发放材料</div>
<div class="a" style="left:596px;top:268px;width:84px;height:17px;background:#f0f0f0;border-top:1px solid #fff;border-right:1px solid #696969;box-shadow:inset -1px 0 0 #a0a0a0;border-left:1px solid #fff;border-radius:2px 2px 0 0"></div>
<div class="t " style="left:601px;top:270px;">发放宝石</div>
<div class="a" style="left:680px;top:268px;width:84px;height:17px;background:#f0f0f0;border-top:1px solid #fff;border-right:1px solid #696969;box-shadow:inset -1px 0 0 #a0a0a0;border-left:1px solid #fff;border-radius:2px 2px 0 0"></div>
<div class="t " style="left:685px;top:270px;">发放装备</div>
<div class="a" style="left:764px;top:268px;width:84px;height:17px;background:#f0f0f0;border-top:1px solid #fff;border-right:1px solid #696969;box-shadow:inset -1px 0 0 #a0a0a0;border-left:1px solid #fff;border-radius:2px 2px 0 0"></div>
<div class="t " style="left:769px;top:270px;">账号管理</div>
<div class="a" style="left:848px;top:268px;width:90px;height:17px;background:#f0f0f0;border-top:1px solid #fff;border-right:1px solid #696969;box-shadow:inset -1px 0 0 #a0a0a0;border-left:1px solid #fff;border-radius:2px 2px 0 0"></div>
<div class="t " style="left:853px;top:270px;">合区管理</div>
<div class="a" style="left:938px;top:268px;width:78px;height:17px;background:#f0f0f0;border-top:1px solid #fff;border-right:1px solid #696969;box-shadow:inset -1px 0 0 #a0a0a0;border-left:1px solid #fff;border-radius:2px 2px 0 0"></div>
<div class="t " style="left:943px;top:270px;">帮会管理</div>
<div class="gb" style="left:254px;top:303px;width:756px;height:360px;"></div>
<div class="t " style="left:607px;top:297px;width:50px;height:14px;line-height:14px;background:#f0f0f0;color:#000080;padding-left:1px">人物信息</div>
<div class="sk" style="left:334px;top:317px;width:139px;height:21px;"></div>
<div class="t " style="left:289px;top:322px;">帐号<span class="m" style="font-weight:bold;margin-left:1px">:</span></div>
<div class="sk" style="left:334px;top:357px;width:139px;height:21px;"></div>
<div class="t " style="left:276px;top:360px;">角色名<span class="m" style="font-weight:bold;margin-left:1px">:</span></div>
<div class="sk" style="left:333px;top:398px;width:139px;height:21px;"></div>
<div class="t " style="left:287px;top:401px;">等级<span class="m" style="font-weight:bold;margin-left:1px">:</span></div>
<div class="sk" style="left:333px;top:441px;width:141px;height:20px;"></div>
<div class="cb" style="left:455px;top:443px;width:17px;height:16px;"></div>
<div class="t " style="left:287px;top:444px;">门派<span class="m" style="font-weight:bold;margin-left:1px">:</span></div>
<div class="sk" style="left:333px;top:482px;width:141px;height:20px;"></div>
<div class="cb" style="left:455px;top:484px;width:17px;height:16px;"></div>
<div class="t " style="left:287px;top:483px;">性别<span class="m" style="font-weight:bold;margin-left:1px">:</span></div>
<div class="sk" style="left:332px;top:523px;width:139px;height:21px;"></div>
<div class="t " style="left:286px;top:526px;">称号<span class="m" style="font-weight:bold;margin-left:1px">:</span></div>
<div class="sk" style="left:332px;top:565px;width:139px;height:21px;"></div>
<div class="t " style="left:286px;top:568px;">活力<span class="m" style="font-weight:bold;margin-left:1px">:</span></div>
<div class="sk" style="left:332px;top:606px;width:139px;height:21px;"></div>
<div class="t " style="left:262px;top:611px;">活力上限<span class="m" style="font-weight:bold;margin-left:1px">:</span></div>
<div class="sk" style="left:574px;top:318px;width:139px;height:21px;"></div>
<div class="t " style="left:533px;top:322px;">力量<span class="m" style="font-weight:bold;margin-left:1px">:</span></div>
<div class="sk" style="left:574px;top:356px;width:139px;height:21px;"></div>
<div class="t " style="left:533px;top:362px;">灵气<span class="m" style="font-weight:bold;margin-left:1px">:</span></div>
<div class="sk" style="left:574px;top:396px;width:139px;height:21px;"></div>
<div class="t " style="left:533px;top:402px;">体力<span class="m" style="font-weight:bold;margin-left:1px">:</span></div>
<div class="sk" style="left:574px;top:437px;width:139px;height:21px;"></div>
<div class="t " style="left:532px;top:442px;">定力<span class="m" style="font-weight:bold;margin-left:1px">:</span></div>
<div class="sk" style="left:574px;top:477px;width:139px;height:21px;"></div>
<div class="t " style="left:532px;top:482px;">身法<span class="m" style="font-weight:bold;margin-left:1px">:</span></div>
<div class="sk" style="left:574px;top:518px;width:139px;height:21px;"></div>
<div class="t " style="left:533px;top:523px;">潜能<span class="m" style="font-weight:bold;margin-left:1px">:</span></div>
<div class="sk" style="left:574px;top:559px;width:139px;height:21px;"></div>
<div class="t " style="left:532px;top:565px;">善恶<span class="m" style="font-weight:bold;margin-left:1px">:</span></div>
<div class="sk" style="left:574px;top:601px;width:139px;height:21px;"></div>
<div class="t " style="left:531px;top:607px;">杀气<span class="m" style="font-weight:bold;margin-left:1px">:</span></div>
<div class="sk" style="left:574px;top:641px;width:139px;height:21px;"></div>
<div class="t " style="left:509px;top:645px;">修炼点数<span class="m" style="font-weight:bold;margin-left:1px">:</span></div>
<div class="sk" style="left:817px;top:318px;width:139px;height:21px;"></div>
<div class="t " style="left:775px;top:320px;">经验<span class="m" style="font-weight:bold;margin-left:1px">:</span></div>
<div class="sk" style="left:818px;top:356px;width:139px;height:21px;"></div>
<div class="t " style="left:775px;top:358px;">元宝<span class="m" style="font-weight:bold;margin-left:1px">:</span></div>
<div class="sk" style="left:818px;top:396px;width:139px;height:21px;"></div>
<div class="t " style="left:775px;top:400px;">赠点<span class="m" style="font-weight:bold;margin-left:1px">:</span></div>
<div class="sk" style="left:818px;top:437px;width:139px;height:21px;"></div>
<div class="t " style="left:753px;top:441px;">剧情贡献<span class="m" style="font-weight:bold;margin-left:1px">:</span></div>
<div class="sk" style="left:819px;top:476px;width:139px;height:21px;"></div>
<div class="t " style="left:753px;top:482px;">门派贡献<span class="m" style="font-weight:bold;margin-left:1px">:</span></div>
<div class="sk" style="left:820px;top:518px;width:139px;height:21px;"></div>
<div class="t " style="left:753px;top:522px;">所在地图<span class="m" style="font-weight:bold;margin-left:1px">:</span></div>
<div class="sk" style="left:820px;top:559px;width:139px;height:21px;"></div>
<div class="t " style="left:770px;top:562px;"><span class="m">X</span>坐标<span class="m" style="font-weight:bold;margin-left:1px">:</span></div>
<div class="sk" style="left:821px;top:601px;width:139px;height:21px;"></div>
<div class="t " style="left:770px;top:605px;"><span class="m">Y</span>坐标<span class="m" style="font-weight:bold;margin-left:1px">:</span></div>
<div class="sk" style="left:823px;top:641px;width:104px;height:20px;"></div>
<div class="t " style="left:763px;top:643px;">登录码<span class="m" style="font-weight:bold;margin-left:1px">:</span></div>
<div class="a" style="left:225px;top:646px;width:950px;height:30px;background:#f0f0f0"></div>
<div class="a" style="left:228px;top:646px;width:947px;height:1px;background:#fff"></div>
<div class="a" style="left:228px;top:647px;width:947px;height:1px;background:#e8e8e8"></div>
<div class="a" style="left:228px;top:648px;width:947px;height:1px;background:#707070"></div>
<div class="a" style="left:228px;top:648px;width:642px;height:1px;background:#000"></div>
<div class="a" style="left:228px;top:649px;width:947px;height:1px;background:#f8f8f8"></div>
<svg style="left:228px;top:648px" width="700" height="22"><path d="M1 0.500L10 18.500H48L52 12" fill="none" stroke="#000"/><path d="M47 0.500L56 18.500H140L144 12" fill="none" stroke="#000"/><path d="M139 0.500L148 18.500H257L261 12" fill="none" stroke="#000"/><path d="M256 0.500L265 18.500H304L308 12" fill="none" stroke="#000"/><path d="M303 0.500L312 18.500H423L427 12" fill="none" stroke="#000"/><path d="M422 0L430 18.500H497L503 0z" fill="#fff" stroke="none"/><path d="M422 0.500L430 18.500H497L503 0.500" fill="none" stroke="#000"/><path d="M497 18.500H632L641 0.500" fill="none" stroke="#000"/></svg>
<div class="t " style="left:241px;top:652px;color:#000080">窗口1</div>
<div class="t " style="left:287px;top:652px;color:#808000"><span class="m">[</span>全局变量表<span class="m">]</span></div>
<div class="t " style="left:379px;top:652px;color:#000">窗口程序集<span style="position:relative;top:-1.5px">_</span>窗口1</div>
<div class="t " style="left:496px;top:652px;color:#000080">窗口2</div>
<div class="t " style="left:543px;top:652px;color:#000">窗口程序集<span style="position:relative;top:-1.5px">_</span>窗口2</div>
<div class="t " style="left:661px;top:652px;color:#000080;font-weight:bold"><span style="position:relative;top:-1.5px">_</span>启动窗口</div>
<div class="t " style="left:737px;top:652px;">窗口程序集<span style="position:relative;top:-1.5px">_</span>启动窗口</div>
<div class="a" style="left:0px;top:668px;width:1175px;height:1px;background:#c8c8c8"></div>
<div class="a" style="left:0px;top:669px;width:1175px;height:1px;background:#fff"></div>
<div class="a" style="left:0px;top:670px;width:1175px;height:1px;background:#f8f8f8"></div>
<div class="a" style="left:0px;top:673px;width:1175px;height:1px;background:#909090"></div>
<div class="a" style="left:0px;top:674px;width:1175px;height:1px;background:#f8f8f8"></div>
<div class="a" style="left:1px;top:678px;width:12px;height:12px;background:#f0f0f0;border:1px solid;border-color:#fff #808080 #808080 #fff"></div>
<svg style="left:3px;top:680px" width="7" height="7"><path d="M0.800 1.500l5 4.500M5.800 1.500l-5 4.500" stroke="#000" stroke-width="1.800"/></svg>
<div class="a" style="left:1px;top:691px;width:12px;height:12px;background:#f0f0f0;border:1px solid;border-color:#fff #808080 #808080 #fff"></div>
<svg style="left:3px;top:693px" width="7" height="7" shape-rendering="crispEdges"><rect x="0.500" y="1.500" width="6" height="5" fill="none" stroke="#000"/><path d="M0 1.500h7" stroke="#000" stroke-width="2"/></svg>
<div class="vl" style="left:7px;top:705px;height:60px"></div>
<div class="a" style="left:20px;top:680px;width:55px;height:19px;border:1px solid;border-color:#fff transparent transparent #fff;border-radius:3px 3px 0 0;"></div>
<div class="t " style="left:46px;top:683px;">提示</div>
<div class="a" style="left:76px;top:677px;width:60px;height:23px;background:#f0f0f0;border:1px solid;border-color:#fff #696969 #f0f0f0 #fff;border-radius:3px 3px 0 0;box-shadow:inset -1px 0 0 #a0a0a0"></div>
<div class="t " style="left:103px;top:680px;">输出</div>
<div class="a" style="left:136px;top:680px;width:68px;height:19px;border:1px solid;border-color:#fff #696969 transparent transparent;border-radius:3px 3px 0 0;box-shadow:inset -1px 0 0 #a0a0a0"></div>
<div class="t " style="left:162px;top:683px;">调用表</div>
<div class="a" style="left:206px;top:680px;width:68px;height:19px;border:1px solid;border-color:#fff #696969 transparent transparent;border-radius:3px 3px 0 0;box-shadow:inset -1px 0 0 #a0a0a0"></div>
<div class="t " style="left:232px;top:683px;">监视表</div>
<div class="a" style="left:275px;top:680px;width:70px;height:19px;border:1px solid;border-color:#fff #696969 transparent transparent;border-radius:3px 3px 0 0;box-shadow:inset -1px 0 0 #a0a0a0"></div>
<div class="t " style="left:301px;top:683px;">变量表</div>
<div class="a" style="left:346px;top:680px;width:62px;height:19px;border:1px solid;border-color:#fff #696969 transparent transparent;border-radius:3px 3px 0 0;box-shadow:inset -1px 0 0 #a0a0a0"></div>
<div class="t " style="left:372px;top:683px;">搜寻1</div>
<div class="a" style="left:409px;top:680px;width:63px;height:19px;border:1px solid;border-color:#fff #696969 transparent transparent;border-radius:3px 3px 0 0;box-shadow:inset -1px 0 0 #a0a0a0"></div>
<div class="t " style="left:435px;top:683px;">搜寻2</div>
<div class="a" style="left:474px;top:680px;width:81px;height:19px;border:1px solid;border-color:#fff #696969 transparent transparent;border-radius:3px 3px 0 0;box-shadow:inset -1px 0 0 #a0a0a0"></div>
<div class="t " style="left:500px;top:683px;">剪辑历史</div>
<svg style="left:26px;top:680px" width="12" height="16"><text x="0" y="14" font-family="Liberation Sans,sans-serif" font-weight="bold" font-size="16" fill="#f0e000" stroke="#000" stroke-width="1.400" paint-order="stroke">?</text></svg>
<svg style="left:84px;top:680px" width="12" height="13" viewBox="0 0 12 13"><rect x="0.600" y="0.600" width="10.800" height="11.800" fill="#fff" stroke="#000" stroke-width="1.200"/><path d="M4 1.700h7" stroke="#0000ff" stroke-width="1.400"/><path d="M3 5.500h6M3 7.500h4M3 9.500h5" stroke="#000"/></svg>
<svg style="left:141px;top:681px" width="13" height="14" viewBox="0 0 13 14"><g shape-rendering="crispEdges" stroke="#000" fill="none"><path d="M1.500 0v5M5.500 0v5M9.500 0v5M0 2.500h3M4 2.500h3M8 2.500h3M1.500 8v6M5.500 8v6M9.500 8v6M0 10.500h3M4 10.500h3M8 10.500h3"/></g><path d="M0 6.500h12" stroke="#0000c0" stroke-dasharray="2 1" shape-rendering="crispEdges"/></svg>
<svg style="left:210px;top:681px" width="16" height="16" viewBox="0 0 16 16"><circle cx="6" cy="6" r="5" fill="#fff" stroke="#000" stroke-width="1.300"/><path d="M10 10l5 5" stroke="#000" stroke-width="2"/></svg>
<svg style="left:279px;top:683px" width="18" height="12" viewBox="0 0 18 12"><path d="M1 5l4-4 4 4-4 5z" fill="#e8d800" stroke="#000"/><path d="M9 5l4-4 4 4-4 5z" fill="#fff" stroke="#000"/></svg>
<svg style="left:350px;top:682px" width="16" height="15" viewBox="0 0 16 15"><rect x="0.500" y="0.500" width="11" height="12" fill="#fff" stroke="#000" stroke-width="1.300"/><path d="M2 3h3M2 5.500h3M2 8h3M2 10.500h6M7 2.500h3" stroke="#000"/><circle cx="8.500" cy="7" r="3" fill="#f0f0f0" stroke="#000" stroke-dasharray="1 1"/><path d="M11 10l4 4" stroke="#000" stroke-width="2"/></svg>
<svg style="left:414px;top:682px" width="16" height="15" viewBox="0 0 16 15"><rect x="0.500" y="0.500" width="11" height="12" fill="#fff" stroke="#000" stroke-width="1.300"/><path d="M2 3h3M2 5.500h3M2 8h3M2 10.500h6M7 2.500h3" stroke="#000"/><circle cx="8.500" cy="7" r="3" fill="#f0f0f0" stroke="#000" stroke-dasharray="1 1"/><path d="M11 10l4 4" stroke="#000" stroke-width="2"/></svg>
<svg style="left:481px;top:683px" width="11" height="13" viewBox="0 0 11 13"><rect x="0.500" y="0.500" width="10" height="12" fill="#fff" stroke="#000"/><path d="M2.500 3.500h6M2.500 6h6M2.500 8.500h4" stroke="#000"/></svg>
<div class="a" style="left:17px;top:698px;width:1160px;height:1px;background:#fff"></div>
<div class="a" style="left:17px;top:698px;width:1px;height:62px;background:#fff"></div>
<div class="a" style="left:19px;top:700px;width:1160px;height:2px;background:#fff"></div>
<div class="a" style="left:20px;top:702px;width:1160px;height:60px;background:#fff;border:1px solid;border-color:#a0a0a0 #fff #fff #a0a0a0;box-shadow:inset 1px 1px 0 #696969"></div>
</body></html>
